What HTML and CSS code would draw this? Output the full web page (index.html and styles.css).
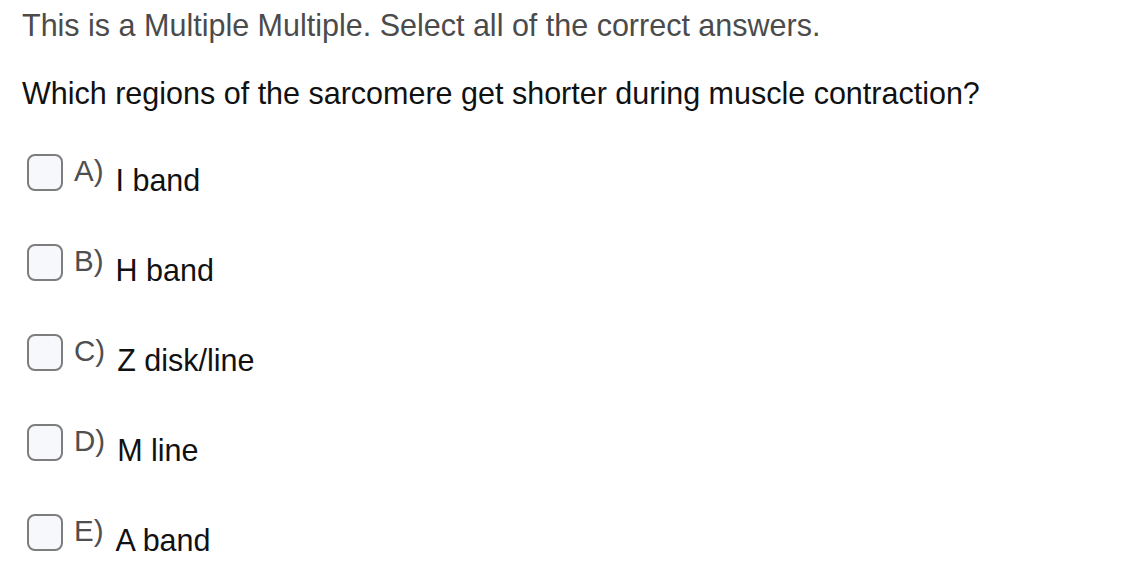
FILE: index.html
```html
<!DOCTYPE html>
<html>
<head>
<meta charset="utf-8">
<link rel="stylesheet" href="styles.css">
</head>
<body>
<div class="question">
  <p class="instructions">This is a Multiple Multiple. Select all of the correct answers.</p>
  <p class="prompt">Which regions of the sarcomere get shorter during muscle contraction?</p>
  <ul class="choices">
    <li class="choice"><span class="box"></span><span class="letter">A)</span><span class="answer">I band</span></li>
    <li class="choice"><span class="box"></span><span class="letter">B)</span><span class="answer">H band</span></li>
    <li class="choice"><span class="box"></span><span class="letter">C)</span><span class="answer">Z disk/line</span></li>
    <li class="choice"><span class="box"></span><span class="letter">D)</span><span class="answer">M line</span></li>
    <li class="choice"><span class="box"></span><span class="letter">E)</span><span class="answer">A band</span></li>
  </ul>
</div>
</body>
</html>
```
FILE: styles.css
```css
html, body {
  margin: 0;
  padding: 0;
  background: #ffffff;
}
body {
  font-family: "Liberation Sans", Arial, Helvetica, sans-serif;
}
.question {
  padding: 8px 0 0 22px;
}
.instructions {
  margin: 0;
  font-size: 30.5px;
  line-height: 34px;
  color: #4b4b4b;
}
.prompt {
  margin: 34px 0 0 0;
  font-size: 30.5px;
  line-height: 34px;
  color: #111111;
}
.choices {
  list-style: none;
  margin: 44px 0 0 0;
  padding: 0;
}
.choice {
  display: flex;
  align-items: flex-start;
  height: 90px;
}
.box {
  box-sizing: border-box;
  width: 36px;
  height: 37px;
  margin-left: 5px;
  border: 2px solid #7d7d7d;
  border-radius: 8px;
  background: #f7f8fc;
  flex: none;
}
.letter {
  margin-left: 11px;
  font-size: 29.5px;
  line-height: 34px;
  color: #4f4f4f;
}
.answer {
  margin-left: 12px;
  margin-top: 9px;
  font-size: 30.5px;
  line-height: 34px;
  color: #111111;
}
```
